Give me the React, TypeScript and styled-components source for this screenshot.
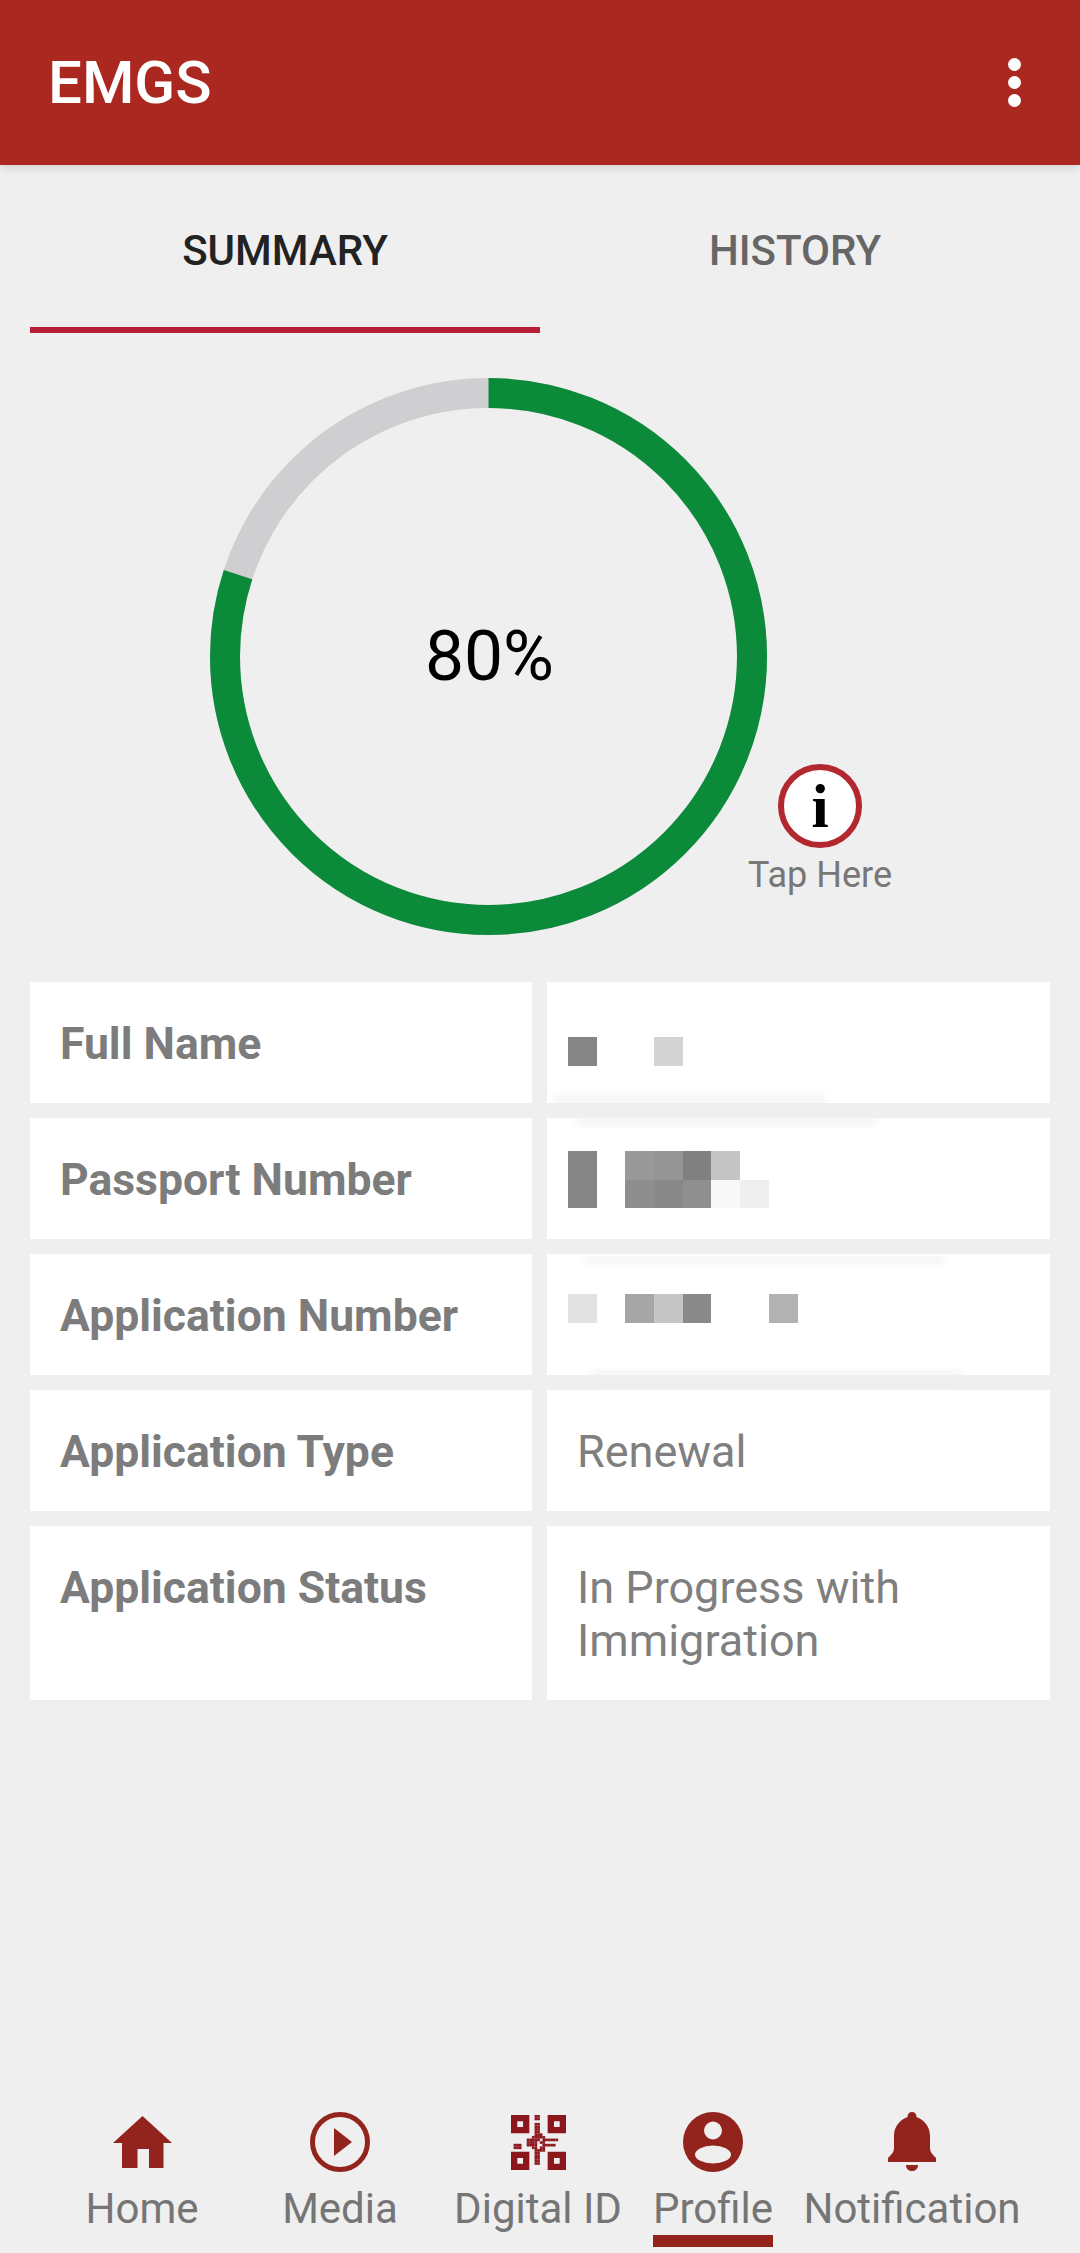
import React from 'react';
import styled, { createGlobalStyle } from 'styled-components';

const GlobalStyle = createGlobalStyle`
  html, body {
    margin: 0;
    padding: 0;
    background: #efefef;
    font-family: Roboto, "Liberation Sans", sans-serif;
  }
  * {
    box-sizing: border-box;
  }
`;

const Page = styled.div`
  display: flex;
  flex-direction: column;
  width: 1080px;
  height: 2253px;
  background: #efefef;
  overflow: hidden;
`;

const AppBar = styled.header`
  display: flex;
  align-items: center;
  justify-content: space-between;
  height: 165px;
  flex-shrink: 0;
  padding: 0 59px 0 48px;
  background: #ab2820;
  box-shadow: 0 2px 9px rgba(0, 0, 0, 0.14);
`;

const AppTitle = styled.h1`
  margin: 0;
  font-size: 60px;
  font-weight: 500;
  color: #fff;
`;

const MenuDots = styled.div`
  display: flex;
  flex-direction: column;
  gap: 5px;
  span {
    width: 13px;
    height: 13px;
    border-radius: 50%;
    background: #fff;
  }
`;

const Tabs = styled.nav`
  display: grid;
  grid-template-columns: 1fr 1fr;
  margin: 0 30px;
`;

const Tab = styled.div<{ $active?: boolean }>`
  height: 168px;
  padding-top: 61px;
  text-align: center;
  font-size: 42px;
  line-height: 50px;
  font-weight: 500;
  color: ${props => (props.$active ? '#222' : '#666')};
  border-bottom: 6px solid ${props => (props.$active ? '#b81d36' : 'transparent')};
`;

const RingRow = styled.section`
  display: flex;
  padding: 45px 0 47px 210px;
`;

const RingBox = styled.div`
  display: grid;
  place-items: center;
  width: 557px;
  height: 557px;
  svg {
    grid-area: 1 / 1;
  }
`;

const Percent = styled.div`
  grid-area: 1 / 1;
  padding-left: 2px;
  font-size: 69.5px;
  color: #000;
`;

const TapBlock = styled.div`
  display: flex;
  flex-direction: column;
  align-items: center;
  width: 142px;
  margin: 386px 0 0 -18px;
`;

const InfoBadge = styled.div`
  display: flex;
  align-items: center;
  justify-content: center;
  width: 84px;
  height: 84px;
  border: 6px solid #b3272f;
  border-radius: 50%;
  background: #fff;
  font-family: "Liberation Serif", serif;
  font-size: 62px;
  font-weight: 700;
  line-height: 1;
  color: #000;
`;

const TapLabel = styled.div`
  margin-top: 4px;
  font-size: 36px;
  line-height: 46px;
  color: #777;
  white-space: nowrap;
`;

const InfoTable = styled.section`
  display: grid;
  grid-template-columns: 502px 503px;
  grid-template-rows: repeat(4, 121px) 174px;
  column-gap: 15px;
  row-gap: 15px;
  margin: 0 30px;
`;

const LabelCell = styled.div`
  padding: 36px 30px 0;
  background: #fff;
  font-size: 44.5px;
  line-height: 53px;
  font-weight: 700;
  color: #7c7c7c;
`;

const ValueCell = styled.div`
  position: relative;
  padding: 35px 30px 0;
  background: #fff;
  font-size: 45px;
  line-height: 53px;
  color: #7f7f7f;
`;

const MosaicCell = styled(ValueCell)<{ $offset: number }>`
  padding: ${props => props.$offset}px 0 0 21px;
`;

const MosaicRow = styled.div`
  display: flex;
`;

const MosaicTile = styled.div<{ $tone: string }>`
  width: 28.7px;
  height: 28.5px;
  background: ${props => props.$tone};
`;

const Smudge = styled.div<{ $left: number; $top: number; $width: number }>`
  position: absolute;
  left: ${props => props.$left}px;
  top: ${props => props.$top}px;
  width: ${props => props.$width}px;
  height: 8px;
  background: #efefef;
  opacity: 0.7;
  filter: blur(3px);
`;

const Spacer = styled.div`
  flex: 1;
`;

const BottomNav = styled.footer`
  display: grid;
  grid-template-columns: 198px 198px 198px 152px 246px;
  padding: 0 45px 6px 43px;
`;

const NavItem = styled.div`
  display: flex;
  flex-direction: column;
  align-items: center;
`;

const NavIcon = styled.div`
  display: flex;
  align-items: center;
  justify-content: center;
  height: 60px;
  margin-bottom: 14px;
  svg {
    display: block;
  }
`;

const NavLabel = styled.div<{ $active?: boolean }>`
  padding-bottom: 3px;
  font-size: 42px;
  line-height: 46px;
  color: #757575;
  white-space: nowrap;
  border-bottom: 12px solid ${props => (props.$active ? '#93231d' : 'transparent')};
`;

const ICON_RED = '#93231d';
const QR_RED = '#8b161c';

// the corner squares are drawn apart, these are the data modules only
const QR_ROWS = [
  '000000000110000000000',
  '000000000110000000000',
  '000000000000000000000',
  '000000000110000000000',
  '000000000110000000000',
  '000000000110000000000',
  '000000000110000000000',
  '000000000111000000000',
  '000000001111100000000',
  '000000111110111111000',
  '000000111101100000000',
  '011100111100111110000',
  '011100001101100000000',
  '000000000111100000000',
  '000000000110000000000',
  '000000000110000000000',
  '000000000110000000000',
  '000000000110000000000',
  '000000000110000000000',
  '000000000000000000000',
  '000000000000000000000',
];

const QR_FINDER = 'h7v7h-7Z m2.4 2.4v2.2h2.2v-2.2Z';

const HomeIcon = () => (
  <svg width="59" height="52" viewBox="0 0 59 52">
    <path fill={ICON_RED} d="M29.5 0 L59 27 H50.5 V52 H36 V33 H24.5 V52 H9 V27 H0 Z" />
  </svg>
);

const MediaIcon = () => (
  <svg width="60" height="60" viewBox="0 0 60 60">
    <circle cx="30" cy="30" r="27.5" fill="none" stroke={ICON_RED} strokeWidth="5" />
    <path fill={ICON_RED} d="M24 16 L42 30 L24 44 Z" />
  </svg>
);

const QrIcon = () => (
  <svg width="55" height="55" viewBox="0 0 21 21">
    <path
      fill={QR_RED}
      fillRule="evenodd"
      d={`M0 0${QR_FINDER} M14 0${QR_FINDER} M0 14${QR_FINDER} M14 14${QR_FINDER}`}
    />
    {QR_ROWS.map((row, y) =>
      row.split('').map((bit, x) =>
        bit === '1' ? <rect key={`${x}-${y}`} x={x} y={y} width="1.02" height="1.02" fill={QR_RED} /> : null
      )
    )}
  </svg>
);

const ProfileIcon = () => (
  <svg width="60" height="60" viewBox="0 0 60 60">
    <path
      fill={ICON_RED}
      fillRule="evenodd"
      d="M30 0 A30 30 0 1 1 30 60 A30 30 0 1 1 30 0 Z M30 9.5 A9 9 0 1 0 30 27.5 A9 9 0 1 0 30 9.5 Z M30 33.5 A18 9 0 1 0 30 51.5 A18 9 0 1 0 30 33.5 Z"
    />
  </svg>
);

const BellIcon = () => (
  <svg width="48" height="60" viewBox="0 0 48 60">
    <path
      fill={ICON_RED}
      d="M24 0 C27 0 28.5 2 28.5 5 C36 8 42 14 42 24 L42 36 C42 40 44 42 48 46 L48 50 L0 50 L0 46 C4 42 6 40 6 36 L6 24 C6 14 12 8 19.5 5 C19.5 2 21 0 24 0 Z M18 53 H30 C30 57 27 59 24 59 C21 59 18 57 18 53 Z"
    />
  </svg>
);

const ProgressRing = ({ value }: { value: number }) => {
  const radius = 263.5;
  const circumference = 2 * Math.PI * radius;
  return (
    <svg width="557" height="557" viewBox="0 0 557 557">
      <circle cx="278.5" cy="278.5" r={radius} fill="none" stroke="#cfcfd1" strokeWidth="30" />
      <circle
        cx="278.5"
        cy="278.5"
        r={radius}
        fill="none"
        stroke="#0b8b3a"
        strokeWidth="30"
        strokeDasharray={`${(circumference * value) / 100} ${circumference}`}
        transform="rotate(-90 278.5 278.5)"
      />
    </svg>
  );
};

const Mosaic = ({ rows }: { rows: string[][] }) => (
  <>
    {rows.map((row, i) => (
      <MosaicRow key={i}>
        {row.map((tone, j) => (
          <MosaicTile key={j} $tone={tone} />
        ))}
      </MosaicRow>
    ))}
  </>
);

const W = '#ffffff';

const navItems = [
  { label: 'Home', icon: <HomeIcon /> },
  { label: 'Media', icon: <MediaIcon /> },
  { label: 'Digital ID', icon: <QrIcon /> },
  { label: 'Profile', icon: <ProfileIcon />, active: true },
  { label: 'Notification', icon: <BellIcon /> },
];

export default function App() {
  return (
    <Page>
      <GlobalStyle />
      <AppBar>
        <AppTitle>EMGS</AppTitle>
        <MenuDots>
          <span />
          <span />
          <span />
        </MenuDots>
      </AppBar>

      <Tabs>
        <Tab $active>SUMMARY</Tab>
        <Tab>HISTORY</Tab>
      </Tabs>

      <RingRow>
        <RingBox>
          <ProgressRing value={80} />
          <Percent>80%</Percent>
        </RingBox>
        <TapBlock>
          <InfoBadge>i</InfoBadge>
          <TapLabel>Tap Here</TapLabel>
        </TapBlock>
      </RingRow>

      <InfoTable>
        <LabelCell>Full Name</LabelCell>
        <MosaicCell $offset={55}>
          <Mosaic rows={[['#858585', W, W, '#d3d3d3']]} />
          <Smudge $left={8} $top={113} $width={270} />
        </MosaicCell>

        <LabelCell>Passport Number</LabelCell>
        <MosaicCell $offset={33}>
          <Mosaic
            rows={[
              ['#858585', W, '#999999', '#959595', '#808080', '#c4c4c4'],
              ['#858585', W, '#8e8e8e', '#888888', '#8f8f8f', '#f8f8f8', '#efefef'],
            ]}
          />
          <Smudge $left={30} $top={-1} $width={300} />
        </MosaicCell>

        <LabelCell>Application Number</LabelCell>
        <MosaicCell $offset={40}>
          <Mosaic rows={[['#e2e2e2', W, '#a6a6a6', '#c6c6c6', '#8a8a8a', W, W, '#b2b2b2']]} />
          <Smudge $left={38} $top={2} $width={360} />
          <Smudge $left={45} $top={117} $width={370} />
        </MosaicCell>

        <LabelCell>Application Type</LabelCell>
        <ValueCell>Renewal</ValueCell>

        <LabelCell>Application Status</LabelCell>
        <ValueCell>
          In Progress with
          <br />
          Immigration
        </ValueCell>
      </InfoTable>

      <Spacer />

      <BottomNav>
        {navItems.map(item => (
          <NavItem key={item.label}>
            <NavIcon>{item.icon}</NavIcon>
            <NavLabel $active={item.active}>{item.label}</NavLabel>
          </NavItem>
        ))}
      </BottomNav>
    </Page>
  );
}
